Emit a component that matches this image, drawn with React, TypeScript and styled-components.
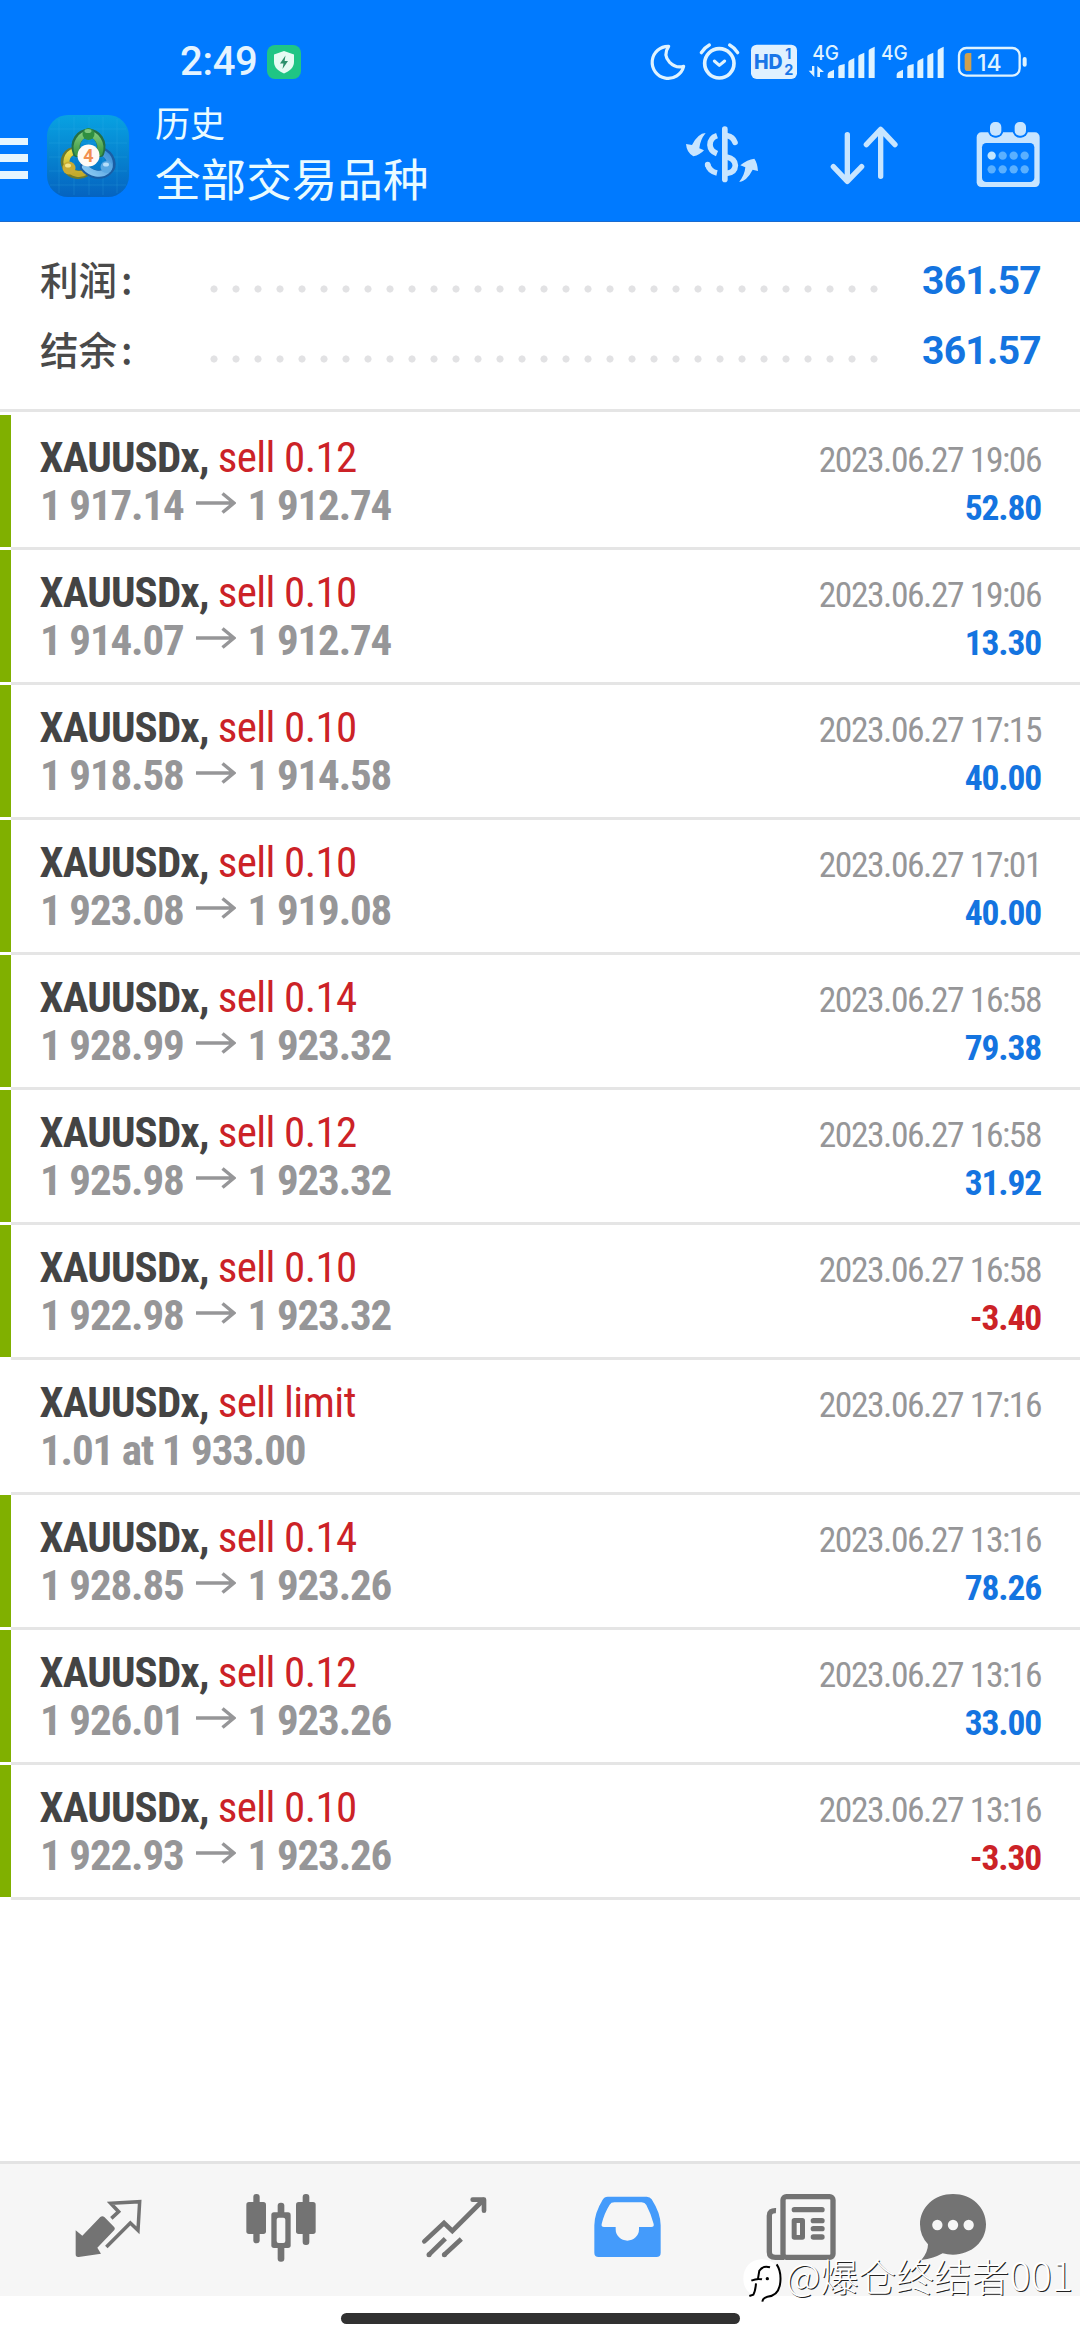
import React from "react";
import styled, { createGlobalStyle } from "styled-components";

const condensed = `"Roboto Condensed", Roboto, "Liberation Sans Narrow", sans-serif`;
const cjk = `"Noto Sans CJK SC", sans-serif`;

const GlobalStyle = createGlobalStyle`
  * { box-sizing: border-box; }
  body { margin: 0; background: #fff; font-family: Roboto, ${cjk}; }
  svg { display: block; flex: none; }
`;

const Screen = styled.div`
  width: 1080px;
  height: 2340px;
  display: flex;
  flex-direction: column;
  background: #fff;
  overflow: hidden;
`;

const Header = styled.header`
  height: 222px;
  background: #007aff;
  display: flex;
  flex-direction: column;
  border-bottom: 1px solid #1a6bd0;
`;

const StatusBar = styled.div`
  height: 104px;
  padding: 20px 52px 0 180px;
  display: flex;
  align-items: center;
`;

const Clock = styled.span`
  font: 500 40px/42px Roboto, sans-serif;
  letter-spacing: -0.3px;
  width: 87px;
  color: #e4f4ff;
  white-space: nowrap;
`;

const StatusIcons = styled.div`
  margin-left: auto;
  display: flex;
  align-items: center;
`;

const StatusGlyph = styled.svg<{ $w: number; $gap?: number }>`
  width: ${(p) => p.$w}px;
  height: 42px;
  margin-left: ${(p) => p.$gap ?? 0}px;
`;

const Toolbar = styled.div`
  height: 117px;
  padding: 0 32px 17px 0;
  display: flex;
  align-items: center;
`;

const MenuIcon = styled.div`
  width: 28px;
  height: 41px;
  margin-top: 8px;
  display: flex;
  flex-direction: column;
  justify-content: space-between;
`;

const MenuBar = styled.span`
  height: 7.5px;
  background: #e6f6ff;
`;

const Logo = styled.svg`
  width: 82px;
  height: 82px;
  margin: 4px 0 0 19px;
`;

const Titles = styled.div`
  margin: -3px 0 0 26px;
  color: #e9fbff;
  font-family: ${cjk};
`;

const Caption = styled.div`
  font-size: 35px;
  line-height: 48px;
`;

const Title = styled.div`
  font-size: 45.6px;
  line-height: 62px;
`;

const Actions = styled.div`
  margin-left: auto;
  display: flex;
  gap: 64px;
`;

const ActionIcon = styled.svg`
  width: 80px;
  height: 80px;
`;

const Summary = styled.section`
  height: 190px;
  padding: 24px 39px 0 40px;
  border-bottom: 3px solid #e5e5e5;
`;

const SummaryRow = styled.div`
  height: 70px;
  display: flex;
  align-items: center;
`;

const SummaryLabel = styled.span`
  width: 162.5px;
  height: 70px;
  margin-top: -7px;
  display: flex;
  gap: 4px;
  font: 500 38.5px/70px ${cjk};
  color: #4a4a4a;
`;

const Leader = styled.span`
  width: 682px;
  height: 8px;
  margin-top: 15px;
  background: radial-gradient(circle at 11px 4px, #e2e2e4 3.2px, transparent 3.9px) 0 0 / 22px 8px repeat-x;
`;

const SummaryValue = styled.span`
  flex: 1;
  text-align: right;
  font: 700 39px/70px Roboto, sans-serif;
  letter-spacing: -0.7px;
  color: #1474e0;
  white-space: nowrap;
`;

const List = styled.main`
  flex: 1;
  padding-top: 3px;
`;

const Row = styled.article<{ $bar: boolean }>`
  height: 132px;
  padding: 18px 39px 0 29px;
  border-left: 11px solid ${(p) => (p.$bar ? "#80b000" : "#fff")};
`;

const Divider = styled.div`
  height: 3px;
  margin-left: 11px;
  background: #e5e5e5;
`;

const Line = styled.div`
  height: 48px;
  display: flex;
  align-items: baseline;
  justify-content: space-between;
  font-family: ${condensed};
  font-stretch: 75%;
  line-height: 48px;
  white-space: pre;
`;

const Symbol = styled.span`
  font-size: 43px;
  font-weight: 700;
  letter-spacing: -0.85px;
  margin-left: -0.5px;
  color: #444;
`;

const Side = styled.span`
  font-weight: 400;
  letter-spacing: -0.6px;
  color: #cc2227;
`;

const Prices = styled.span`
  font-size: 43px;
  font-weight: 700;
  letter-spacing: -1.15px;
  color: #969698;
`;

const Arrow = styled.svg`
  && { display: inline-block; }
  width: 40px;
  height: 22px;
  margin: 0 12px 0 12px;
  vertical-align: 6px;
`;

const Time = styled.span`
  font-size: 35.5px;
  letter-spacing: -1.45px;
  color: #969698;
`;

const Profit = styled.span<{ $loss: boolean }>`
  font-size: 35.5px;
  font-weight: 700;
  letter-spacing: -1.15px;
  color: ${(p) => (p.$loss ? "#cc2227" : "#1474e0")};
`;

const NavBar = styled.nav`
  height: 135px;
  padding: 28px 0 0 72px;
  display: flex;
  background: #f6f6f6;
  border-top: 3px solid #e3e3e3;
`;

const NavIcon = styled.svg<{ $gap?: number }>`
  width: 72px;
  height: 72px;
  margin-left: ${(p) => p.$gap ?? 101}px;
`;

const GestureArea = styled.footer`
  height: 44px;
  padding-top: 17px;
  display: flex;
  justify-content: center;
`;

const GestureBar = styled.div`
  width: 399px;
  height: 11px;
  border-radius: 6px;
  background: #313131;
`;

const Watermark = styled.div`
  position: absolute;
  left: 742px;
  top: 2256px;
  display: flex;
  align-items: flex-start;
`;

const WatermarkText = styled.span`
  margin: -4px 0 0 4px;
  font: 300 37.8px/44px ${cjk};
  color: #fff;
  text-shadow: 1px 1px 0 #222;
  white-space: nowrap;
`;

const WatermarkDigits = styled.span`
  font-size: 39.5px;
`;

type Deal = { side: string; from?: string; to?: string; note?: string; time: string; profit?: string };

const deals: Deal[] = [
  { side: "sell 0.12", from: "1 917.14", to: "1 912.74", time: "2023.06.27 19:06", profit: "52.80" },
  { side: "sell 0.10", from: "1 914.07", to: "1 912.74", time: "2023.06.27 19:06", profit: "13.30" },
  { side: "sell 0.10", from: "1 918.58", to: "1 914.58", time: "2023.06.27 17:15", profit: "40.00" },
  { side: "sell 0.10", from: "1 923.08", to: "1 919.08", time: "2023.06.27 17:01", profit: "40.00" },
  { side: "sell 0.14", from: "1 928.99", to: "1 923.32", time: "2023.06.27 16:58", profit: "79.38" },
  { side: "sell 0.12", from: "1 925.98", to: "1 923.32", time: "2023.06.27 16:58", profit: "31.92" },
  { side: "sell 0.10", from: "1 922.98", to: "1 923.32", time: "2023.06.27 16:58", profit: "-3.40" },
  { side: "sell limit", note: "1.01 at 1 933.00", time: "2023.06.27 17:16" },
  { side: "sell 0.14", from: "1 928.85", to: "1 923.26", time: "2023.06.27 13:16", profit: "78.26" },
  { side: "sell 0.12", from: "1 926.01", to: "1 923.26", time: "2023.06.27 13:16", profit: "33.00" },
  { side: "sell 0.10", from: "1 922.93", to: "1 923.26", time: "2023.06.27 13:16", profit: "-3.30" },
];

const PALE = "#dff3ff";
const GREY = "#737373";

const ShieldBadge = () => (
  <svg width="34" height="34" viewBox="0 0 34 34">
    <rect width="34" height="34" rx="8" fill="#1fc585" />
    <path d="M17 6 L27 9.5 V17 C27 22.5 22.5 26 17 28.5 C11.5 26 7 22.5 7 17 V9.5 Z" fill="#e6fbf4" />
    <path d="M18.5 10.5 L13 18.5 H16.5 L15.5 24 L21 16 H17.6 Z" fill="#2c8f6c" />
  </svg>
);

const signalBars = (x: number) => (
  <g fill={PALE}>
    <path d={`M${x} 174 V164 Q${x} 158 ${x + 6} 155 L${x + 19} 149 V174 Z`} />
    <path d={`M${x + 32} 174 V142 Q${x + 32} 138 ${x + 36} 136 L${x + 51} 132 V174 Z`} />
    <path d={`M${x + 62} 174 V128 Q${x + 62} 123 ${x + 66} 121 L${x + 80} 114 V174 Z`} />
    <path d={`M${x + 92} 174 V110 Q${x + 92} 106 ${x + 96} 104 L${x + 110} 98 V174 Z`} />
    <path d={`M${x + 123} 174 V93 Q${x + 123} 89 ${x + 127} 87 L${x + 141} 80 V174 Z`} />
  </g>
);

const StatusGlyphs = () => (
  <StatusIcons>
    <StatusGlyph $w={40} viewBox="84 63 120 126">
      <path d="M146 79 A48 48 0 1 0 191 139 Q168 146 149 127 Q128 105 146 79 Z" fill="none" stroke={PALE} strokeWidth="9.500" strokeLinejoin="round" />
    </StatusGlyph>
    <StatusGlyph $w={43} $gap={10} viewBox="234 63 129 126">
      <g fill="none" stroke={PALE} strokeLinecap="round" strokeLinejoin="round">
        <circle cx="298" cy="130" r="44" strokeWidth="11" />
        <path d="M283 123 L298 136 L314 123" strokeWidth="9" />
        <path d="M244 98 Q253 83 268 75 M329 75 Q344 83 353 98" strokeWidth="10" />
      </g>
    </StatusGlyph>
    <StatusGlyph $w={48} $gap={9} viewBox="390 63 144 126">
      <rect x="393" y="74" width="138" height="103" rx="17" fill="#e0f1ff" />
      <g fill="#1a76e8" fontFamily="Inter, sans-serif" fontWeight="800">
        <text x="402" y="147" fontSize="60" textLength="86" lengthAdjust="spacingAndGlyphs">HD</text>
        <text x="496" y="118" fontSize="42" fontWeight="700">1</text>
        <text x="493" y="165" fontSize="43" fontWeight="700">2</text>
      </g>
    </StatusGlyph>
    <StatusGlyph $w={68} $gap={10} viewBox="564 63 204 126">
      <text x="577" y="120" fontSize="60" fontFamily="Inter, sans-serif" fontWeight="500" fill={PALE} textLength="80" lengthAdjust="spacingAndGlyphs">4G</text>
      <path d="M583 138 V171 L566 152 H576 V138 Z M592 171 V138 L612 156 H600 V171 Z" fill={PALE} />
      {signalBars(623)}
    </StatusGlyph>
    <StatusGlyph $w={65} $gap={4} viewBox="780 63 195 126">
      <text x="783" y="120" fontSize="60" fontFamily="Inter, sans-serif" fontWeight="500" fill={PALE} textLength="80" lengthAdjust="spacingAndGlyphs">4G</text>
      {signalBars(830)}
    </StatusGlyph>
    <StatusGlyph $w={71} $gap={12} viewBox="1011 63 213 126">
      <rect x="1017" y="84" width="182" height="83" rx="22" fill="none" stroke={PALE} strokeWidth="7" />
      <path d="M1054 99 V153 H1043 Q1034 153 1034 143 V109 Q1034 99 1043 99 Z" fill="#cfa04e" />
      <rect x="1208" y="111" width="12" height="29" rx="6" fill={PALE} />
      <text x="1071" y="153" fontSize="70" fontFamily="Inter, sans-serif" fontWeight="500" fill={PALE} textLength="74" lengthAdjust="spacingAndGlyphs">14</text>
    </StatusGlyph>
  </StatusIcons>
);

const AppLogo = () => (
  <Logo viewBox="0 0 82 82">
    <defs>
      <linearGradient id="tile" x1="0" y1="0" x2="0" y2="1">
        <stop offset="0" stopColor="#08a2e2" />
        <stop offset="0.55" stopColor="#0680ce" />
        <stop offset="1" stopColor="#0563c0" />
      </linearGradient>
      <linearGradient id="green" x1="0" y1="0" x2="0" y2="1">
        <stop offset="0" stopColor="#7cc878" />
        <stop offset="1" stopColor="#3f9a45" />
      </linearGradient>
      <linearGradient id="yellow" x1="0" y1="0" x2="0" y2="1">
        <stop offset="0" stopColor="#eadf4c" />
        <stop offset="1" stopColor="#c3aa2c" />
      </linearGradient>
      <linearGradient id="blue" x1="1" y1="0" x2="0" y2="1">
        <stop offset="0" stopColor="#3a8fd6" />
        <stop offset="1" stopColor="#8ecbf4" />
      </linearGradient>
    </defs>
    <rect width="82" height="82" rx="21" fill="url(#tile)" />
    <path d="M12 4 V78 M27 2 V80 M42 2 V80 M56 2 V80 M70 4 V78 M3 14 H79 M2 28 H80 M2 42 H80 M2 56 H80 M3 70 H79" stroke="#3fb4ec" strokeOpacity="0.2" strokeWidth="1" />
    <g fill="none" strokeLinecap="round">
      <path d="M31 36 C20 35 15 45 20 53 C24 61 34 61 40 57" stroke="#6d7a2c" strokeWidth="8.500" />
      <path d="M31 36 C21 36 17 45 21 53 C25 60 34 60 39 57" stroke="url(#yellow)" strokeWidth="6" />
      <path d="M54 36 C65 40 67 51 61 56 C54 62 43 60 37 52" stroke="#1a5ea4" strokeWidth="8.500" />
      <path d="M54 37 C64 41 65 51 60 56 C54 61 44 59 38 52" stroke="url(#blue)" strokeWidth="6" />
      <path d="M30 38 C26 27 33 18 41.500 18 C50 18 57 27 53 38" stroke="#246f45" strokeWidth="8.500" />
      <path d="M30.500 38 C27 28 34 19 41.500 19 C49 19 56 28 52.500 38" stroke="url(#green)" strokeWidth="6" />
    </g>
    <circle cx="41.500" cy="19" r="6" fill="#2f8f40" />
    <ellipse cx="41" cy="16" rx="3.500" ry="2" fill="#7cc77c" />
    <circle cx="22" cy="53" r="6.500" fill="#c9ac34" />
    <ellipse cx="21" cy="50.500" rx="3" ry="2" fill="#f3e58a" />
    <circle cx="59.500" cy="52" r="6" fill="#5aa8e2" />
    <ellipse cx="59" cy="49.500" rx="3" ry="2" fill="#b5defa" />
    <circle cx="41.500" cy="40.500" r="11" fill="#fffaf6" />
    <text x="41.500" y="47" fontSize="18" fontWeight="700" fontFamily="Roboto, sans-serif" textAnchor="middle" fill="#f28f50">4</text>
  </Logo>
);

const ICON = "#c8e5ff";

const HeaderActions = () => (
  <Actions>
    <ActionIcon viewBox="180 282 240 240">
      <g fill={ICON}>
        <rect x="306" y="319" width="17" height="168" rx="8.500" />
        <path d="M257 339 Q234 340 216 375 L198 372 Q200 398 220 409 Q240 405 252 391 L238 385 Q240 360 257 339 Z" />
        <path d="M357 486 Q380 484 398 449 L414 453 Q412 428 403 416 Q382 418 361 436 L376 442 Q374 466 357 486 Z" />
      </g>
      <g fill="none" stroke={ICON} strokeWidth="17">
        <path d="M291 347 Q270 354 270 375 Q271 393 291 401" />
        <path d="M263 434 Q268 454 291 459" />
        <path d="M322 347 Q339 350 345 367" strokeLinecap="round" />
        <path d="M320 411 Q345 416 346 436 Q345 458 320 460" />
      </g>
      <circle cx="263" cy="434" r="8.500" fill={ICON} />
    </ActionIcon>
    <ActionIcon viewBox="615 282 240 240">
      <g fill="none" stroke={ICON} strokeWidth="16" strokeLinecap="round" strokeLinejoin="round">
        <path d="M685 344 V482 M643 440 L685 484 L728 440" />
        <path d="M785 469 V330 M742 374 L785 328 L828 374" />
      </g>
    </ActionIcon>
    <ActionIcon viewBox="1045 282 240 240">
      <rect x="1071" y="337" width="189" height="164" rx="14" fill={ICON} />
      <rect x="1087" y="369" width="157" height="117" rx="13" fill="#007aff" />
      <rect x="1105" y="299" width="46" height="54" rx="21" fill="#007aff" />
      <rect x="1179" y="299" width="46" height="54" rx="21" fill="#007aff" />
      <rect x="1111" y="306" width="34" height="41" rx="15" fill={ICON} />
      <rect x="1185" y="306" width="34" height="41" rx="15" fill={ICON} />
      {[407, 448].map((cy) =>
        [1116, 1149, 1182, 1215].map((cx) => (
          <circle key={`${cx}-${cy}`} cx={cx} cy={cy} r="12.500" fill={cx === 1116 && cy === 407 ? "#c3e6ff" : "#5ab0ff"} />
        ))
      )}
    </ActionIcon>
  </Actions>
);

const BottomNav = () => (
  <NavBar>
    <NavIcon $gap={0} viewBox="36 126 216 216">
      <path d="M47 241 L67 257 L121 201 Q127 196 133 201 L163 232 Q166 236 163 240 L112 293 L123 311 L56 321 Q47 322 47 313 Z" fill={GREY} />
      <path d="M154 205 L176 185 L152 160 L239 155 L234 241 L211 219 L139 291" fill="none" stroke={GREY} strokeWidth="10.500" />
    </NavIcon>
    <NavIcon viewBox="555 126 216 216">
      <g fill={GREY}>
        <rect x="580" y="132" width="19" height="148" rx="9" />
        <rect x="559" y="156" width="59" height="96" rx="8" />
        <rect x="728" y="132" width="20" height="153" rx="9" />
        <rect x="708" y="156" width="59" height="96" rx="8" />
        <rect x="653" y="158" width="20" height="40" rx="9" />
        <rect x="653" y="280" width="20" height="55" rx="9" />
        <rect x="634" y="187" width="58" height="107" rx="8" />
      </g>
      <rect x="650" y="203" width="26" height="76" rx="6" fill="#f6f6f6" />
    </NavIcon>
    <NavIcon viewBox="1074 126 216 216">
      <g fill="none" stroke={GREY} strokeWidth="14">
        <path d="M1093 274 L1152 219 L1177 243 L1270 150" strokeLinecap="round" />
        <path d="M1107 314 L1156 266 M1153 314 L1204 267" />
        <path d="M1238 149 H1272 V182" strokeLinecap="round" strokeLinejoin="round" />
      </g>
      <circle cx="1107" cy="314" r="7.500" fill={GREY} />
      <circle cx="1153" cy="314" r="7.500" fill={GREY} />
    </NavIcon>
    <NavIcon viewBox="33 126 216 216">
      <path fillRule="evenodd" d="M83 140 H200 Q210 140 215 148 Q242 190 242 226 V308 Q242 321 229 321 H56 Q43 321 43 308 V226 Q43 190 68 149 Q73 140 83 140 Z M103 157 Q93 157 89 164 Q72 191 65 222 Q63 231 72 231 H107 V238 A35 34 0 0 0 177 238 V231 H214 Q223 231 221 222 Q213 191 199 165 Q195 157 185 157 Z" fill="#449bfb" />
    </NavIcon>
    <NavIcon viewBox="552 126 216 216">
      <g fill="none" stroke={GREY} strokeWidth="16">
        <rect x="609" y="140" width="150" height="182" rx="10" />
        <path d="M588 182 Q568 181 568 197 V306 Q568 322 586 322 H612" />
      </g>
      <g fill={GREY}>
        <rect x="635" y="171" width="99" height="16" rx="8" />
        <path fillRule="evenodd" d="M643 204 H667 Q675 204 675 212 V261 Q675 269 667 269 H643 Q635 269 635 261 V212 Q635 204 643 204 Z M650 219 V255 H660 V219 Z" />
        <rect x="692" y="204" width="42" height="16" rx="8" />
        <rect x="692" y="228" width="42" height="16" rx="8" />
        <rect x="692" y="253" width="42" height="16" rx="8" />
      </g>
    </NavIcon>
    <NavIcon $gap={81} viewBox="1011 126 216 216">
      <path d="M1119 132 C1175 132 1218 172 1218 223 C1218 276 1173 314 1119 314 Q1102 314 1088 310 Q1062 325 1024 330 Q1044 307 1044 283 Q1020 258 1020 223 C1020 172 1063 132 1119 132 Z" fill={GREY} />
      <g fill="#f6f6f6">
        <circle cx="1072" cy="225" r="15.500" />
        <circle cx="1119" cy="225" r="15.500" />
        <circle cx="1166" cy="225" r="15.500" />
      </g>
    </NavIcon>
  </NavBar>
);

const DealRow = ({ deal }: { deal: Deal }) => (
  <>
    <Row $bar={!deal.note}>
      <Line>
        <Symbol>
          XAUUSDx, <Side>{deal.side}</Side>
        </Symbol>
        <Time>{deal.time}</Time>
      </Line>
      <Line>
        <Prices>
          {deal.note ?? (
            <>
              {deal.from}
              <Arrow viewBox="0 0 40 22">
                <path d="M0 11 H38 M26.500 1.500 L38 11 L26.500 20.500" fill="none" stroke="#969698" strokeWidth="3.500" />
              </Arrow>
              {deal.to}
            </>
          )}
        </Prices>
        {deal.profit && <Profit $loss={deal.profit.startsWith("-")}>{deal.profit}</Profit>}
      </Line>
    </Row>
    <Divider />
  </>
);

export default function App() {
  return (
    <Screen>
      <GlobalStyle />
      <Header>
        <StatusBar>
          <Clock>2:49</Clock>
          <ShieldBadge />
          <StatusGlyphs />
        </StatusBar>
        <Toolbar>
          <MenuIcon>
            <MenuBar />
            <MenuBar />
            <MenuBar />
          </MenuIcon>
          <AppLogo />
          <Titles>
            <Caption>历史</Caption>
            <Title>全部交易品种</Title>
          </Titles>
          <HeaderActions />
        </Toolbar>
      </Header>
      <Summary>
        {["利润", "结余"].map((label) => (
          <SummaryRow key={label}>
            <SummaryLabel>
              {label}
              <span>:</span>
            </SummaryLabel>
            <Leader />
            <SummaryValue>361.57</SummaryValue>
          </SummaryRow>
        ))}
      </Summary>
      <List>
        {deals.map((deal, i) => (
          <DealRow key={i} deal={deal} />
        ))}
      </List>
      <BottomNav />
      <GestureArea>
        <GestureBar />
      </GestureArea>
      <Watermark>
        <svg width="40" height="46" viewBox="36 20 120 138">
          <path d="M95 30 C130 30 150 55 150 90 C150 120 135 138 112 143 L97 156 L90 143 C60 140 40 118 40 88 C40 55 62 30 95 30 Z" fill="#fff" />
          <path d="M140 45 Q154 66 151 98 Q147 140 112 142 Q98 146 97 157" fill="none" stroke="#000" strokeWidth="6" />
          <path d="M120 54 Q98 48 88 64 L84 88 M64 94 Q82 86 96 90 M78 102 Q76 126 70 136 L58 140" fill="none" stroke="#000" strokeWidth="6" />
          <circle cx="112" cy="88" r="5" fill="#000" />
        </svg>
        <WatermarkText>
          @爆仓终结者<WatermarkDigits>001</WatermarkDigits>
        </WatermarkText>
      </Watermark>
    </Screen>
  );
}
